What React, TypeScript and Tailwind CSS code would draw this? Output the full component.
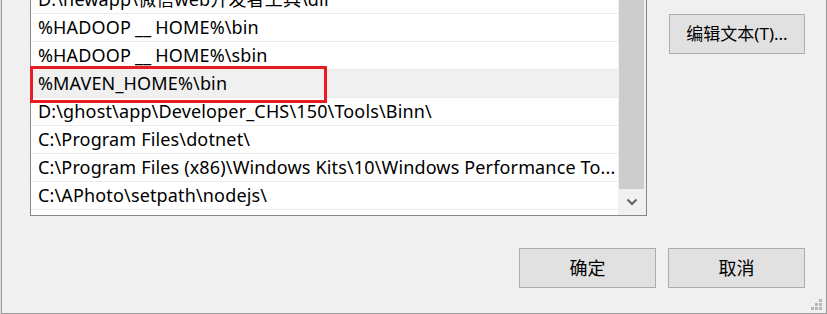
import React from "react";

const U = () => <span className="mx-[4px]">__</span>;

const rows: React.ReactNode[] = [
  "D:\\newapp\\微信web开发者工具\\dll",
  <>%HADOOP<U />HOME%\bin</>,
  <>%HADOOP<U />HOME%\sbin</>,
  "%MAVEN_HOME%\\bin",
  "D:\\ghost\\app\\Developer_CHS\\150\\Tools\\Binn\\",
  "C:\\Program Files\\dotnet\\",
  "C:\\Program Files (x86)\\Windows Kits\\10\\Windows Performance To...",
  "C:\\APhoto\\setpath\\nodejs\\",
];

const font = { fontFamily: '"Noto Sans", "Noto Sans CJK SC", sans-serif' };

export default function App() {
  return (
    <div className="w-[827px] h-[314px] overflow-hidden bg-[#dcdcdc] pl-px">
      <div
        className="relative w-[826px] h-[314px] bg-[#f0f0f0] border-l border-r border-b border-[#9a9a9a] flex flex-col"
        style={font}
      >
        <div className="flex pl-[28px]">
          {/* list box */}
          <div className="-mt-[15px] w-[617px] h-[231px] border border-[#828790] bg-white flex">
            <div className="w-[587px] flex flex-col">
              {rows.map((r, i) => (
                <div
                  key={i}
                  className={
                    "h-[28px] border-b border-[#ececec] pl-[7px] text-[18px] leading-[27px] tracking-[0.15px] text-black whitespace-nowrap overflow-hidden " +
                    (i === 3 ? "bg-[#f0f0f0]" : "")
                  }
                >
                  {r}
                </div>
              ))}
            </div>
            <div className="w-[28px] bg-[#f0f0f0] flex flex-col pl-px pr-[2px]">
              <div className="flex-1 bg-[#cdcdcd]" />
              <div className="h-[26px] flex items-center justify-center">
                <svg width="12" height="8" viewBox="0 0 12 8">
                  <path d="M1.5 1.5 L6 6 L10.5 1.5" fill="none" stroke="#606060" strokeWidth="2" />
                </svg>
              </div>
            </div>
          </div>
          {/* right column */}
          <div className="ml-[22px] mt-[14px]">
            <button className="w-[136px] h-[40px] bg-[#e1e1e1] border border-[#adadad] text-[17px] text-black flex items-center justify-center">
              编辑文本(T)...
            </button>
          </div>
        </div>

        <div className="flex justify-end gap-[12px] pr-[21px] mt-[32px]">
          <button className="w-[137px] h-[40px] bg-[#e1e1e1] border border-[#adadad] text-[18px] text-black flex items-center justify-center">
            确定
          </button>
          <button className="w-[137px] h-[40px] bg-[#e1e1e1] border border-[#adadad] text-[18px] text-black flex items-center justify-center">
            取消
          </button>
        </div>

        {/* red annotation box */}
        <div className="absolute left-[28px] top-[66px] w-[297px] h-[37px] border-[3px] border-[#e81c24]" />

        {/* resize grip */}
        <svg className="absolute right-[3px] bottom-[2px]" width="12" height="12" viewBox="0 0 12 12">
          <g fill="#b8b8b8">
            <rect x="8" y="0" width="3" height="3" />
            <rect x="4" y="4" width="3" height="3" />
            <rect x="8" y="4" width="3" height="3" />
            <rect x="0" y="8" width="3" height="3" />
            <rect x="4" y="8" width="3" height="3" />
            <rect x="8" y="8" width="3" height="3" />
          </g>
        </svg>
      </div>
    </div>
  );
}
